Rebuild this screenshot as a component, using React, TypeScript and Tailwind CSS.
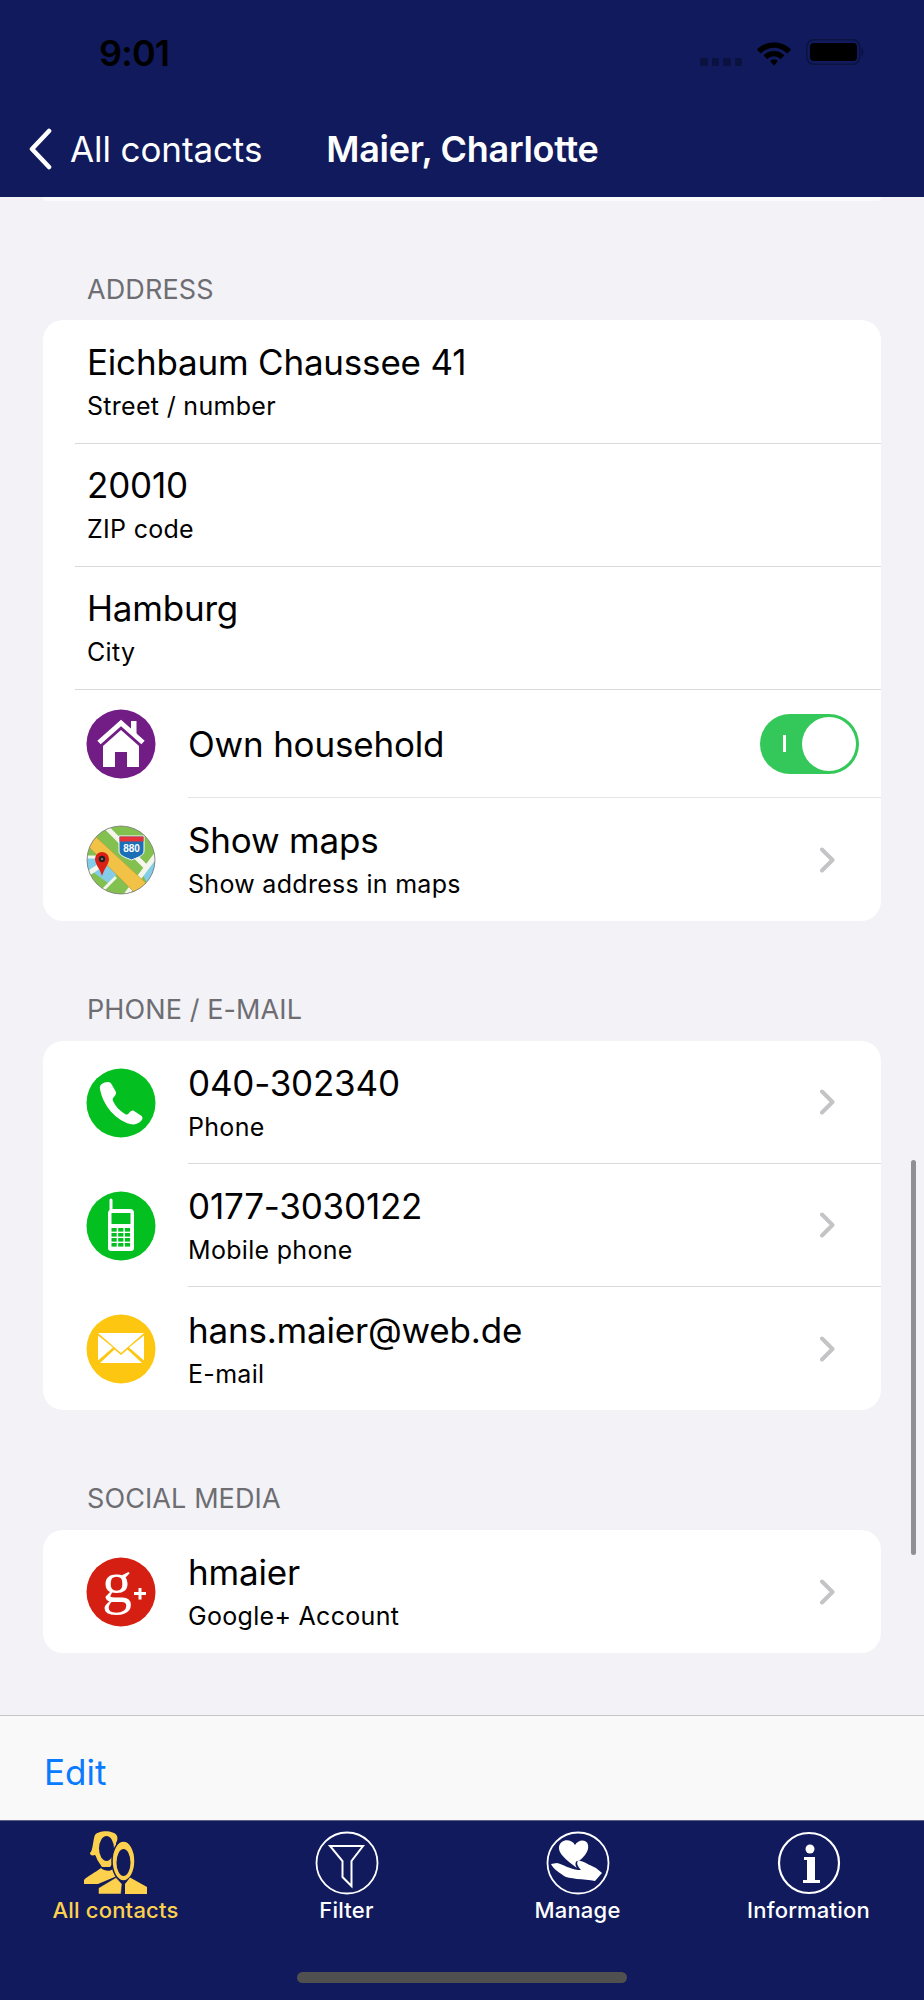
import React from "react";

const font = { fontFamily: "Inter, 'Liberation Sans', sans-serif" };

const Chevron = () => (
  <svg width="15" height="26" viewBox="0 0 15 26" className="shrink-0" fill="none">
    <path d="M2 2.5 L12.5 13 L2 23.5" stroke="#c4c4c7" strokeWidth="4" strokeLinecap="round" strokeLinejoin="round" />
  </svg>
);

const Circle = ({ color, children }: { color: string; children?: React.ReactNode }) => (
  <svg width="70" height="70" viewBox="0 0 70 70" className="shrink-0 overflow-visible">
    <circle cx="35" cy="35" r="34.5" fill={color} />
    {children}
  </svg>
);

const HomeIcon = () => (
  <Circle color="#711d85">
    <path d="M13 33.5 L35 14 L57 33.5" fill="none" stroke="#fff" strokeWidth="5" />
    <rect x="45" y="12" width="5.5" height="14" fill="#fff" />
    <path d="M17 37 L35 21 L53 37 V58 H41 V43 H29 V58 H17 Z" fill="#fff" />
  </Circle>
);

const MapIcon = () => (
  <svg width="70" height="70" viewBox="0 0 70 70" className="shrink-0">
    <defs>
      <clipPath id="mapc"><circle cx="35" cy="35" r="34" /></clipPath>
    </defs>
    <g clipPath="url(#mapc)">
      <rect width="70" height="70" fill="#82c04f" />
      <path d="M0 32 H14 L34 46 L22 58 L0 42 Z" fill="#83cde9" />
      <path d="M70 30 L56 48 L62 60 H70 Z" fill="#83cde9" />
      <path d="M18 0 L60 42 M0 50 L12 42 M40 70 L70 30" stroke="#f4f6ee" strokeWidth="5" fill="none" />
      <path d="M0 32 H26 M12 70 L30 52" stroke="#f4f6ee" strokeWidth="3" fill="none" />
      <path d="M2 21 L10 12 L62 60 L52 71 Z" fill="#f2c247" stroke="#c9a23f" strokeWidth="0.8" />
    </g>
    <circle cx="35" cy="35" r="34" fill="none" stroke="#777" strokeWidth="0.8" />
    <path d="M33 11 H58 V26 C58 31 50 33 45.5 35 C41 33 33 31 33 26 Z" fill="#1c6fb6" stroke="#fff" strokeWidth="1" />
    <rect x="33.5" y="11.5" width="24" height="5" fill="#e5323a" />
    <text x="45.5" y="27" fontSize="10" fontWeight="700" fill="#fff" textAnchor="middle" style={{ fontFamily: "Liberation Sans, sans-serif" }}>880</text>
    <path d="M9 34 A7 7 0 0 1 23 34 C23 39 18 44 16 51 C14 44 9 39 9 34 Z" fill="#d91f16" />
    <circle cx="16" cy="34" r="3.2" fill="#222" />
    <circle cx="16" cy="34" r="1.1" fill="#888" />
  </svg>
);

const PhoneIcon = () => (
  <Circle color="#04bf20">
    <path d="M14 21 C13 17 17 14 22 14 C24 14 25 15 26 17 L30 24 C30.5 26 29 28 27 30 C26.5 31 26.5 32 27 33 C30 39 34 43 39 46 C40.5 47 42 46.5 43 45 C44.5 43 46.5 42 48 43 L55 47.5 C57 49 57 51 55 53 C52 56 48 57 44 56 C30 52 17 38 14 21 Z" fill="#fff" />
  </Circle>
);

const MobileIcon = () => (
  <Circle color="#04bf20">
    <path d="M23.5 9 A1.5 1.5 0 0 1 26.5 9 V18 H44 A4 4 0 0 1 48 22 V57 A3 3 0 0 1 45 60 H25 A3 3 0 0 1 22 57 V22 A4 4 0 0 1 23.5 19 Z" fill="#fff" />
    <rect x="25.5" y="22" width="19" height="11" fill="#04bf20" />
    {[0, 1, 2, 3].map((r) =>
      [0, 1, 2].map((c) => (
        <rect key={`${r}${c}`} x={25.5 + c * 6.7} y={37 + r * 5} width="5.2" height="3.6" fill="#04bf20" />
      ))
    )}
  </Circle>
);

const MailIcon = () => (
  <Circle color="#fdc711">
    <path d="M12 19 H58 L35 39 Z" fill="#fff" />
    <path d="M12 21.5 V46.5 L27 33.5 Z" fill="#fff" />
    <path d="M58 21.5 V46.5 L43 33.5 Z" fill="#fff" />
    <path d="M14 49 L28.5 35.5 L35 41 L41.5 35.5 L56 49 Z" fill="#fff" />
  </Circle>
);

const GoogleIcon = () => (
  <Circle color="#d41f12">
    <text x="31" y="45" fontSize="60" fill="#fff" textAnchor="middle" style={{ fontFamily: "'Liberation Serif', serif" }}>g</text>
    <path d="M52.5 31 H55.5 V35 H60 V38 H55.5 V42.5 H52.5 V38 H48 V35 H52.5 Z" fill="#fff" />
  </Circle>
);

const Title = ({ children }: { children: React.ReactNode }) => (
  <div className="text-[35px] leading-[42px] tracking-[-0.2px] text-black">{children}</div>
);

const Row = ({
  title,
  sub,
  icon,
  chevron,
  border = true,
  h = "h-[123px]",
  textPad = "",
}: {
  title: string;
  sub: string;
  icon?: React.ReactNode;
  chevron?: boolean;
  border?: boolean;
  h?: string;
  textPad?: string;
}) => (
  <div className={`flex items-center ${icon ? "pl-[43px]" : "pl-[32px]"} ${h}`}>
    {icon && <div className="mr-[32px] flex shrink-0 items-center">{icon}</div>}
    <div className={`flex h-full min-w-0 flex-1 items-center pr-[46px] ${icon ? "" : "pl-[12px]"} ${border ? "border-b border-[#d9d9db]" : ""}`}>
      <div className={`flex flex-1 flex-col ${textPad}`}>
        <Title>{title}</Title>
        <div className="mt-[8px] text-[25px] leading-[30px] tracking-[0.3px] text-black">{sub}</div>
      </div>
      {chevron && <Chevron />}
    </div>
  </div>
);

const Section = ({ label, gap = "mt-[15px]", children }: { label: string; gap?: string; children: React.ReactNode }) => (
  <div>
    <div className="pl-[87px] text-[27px] leading-[32px] tracking-[0.1px] text-[#6d6d72]">{label}</div>
    <div className={`mx-[43px] overflow-hidden rounded-[20px] bg-white ${gap}`}>{children}</div>
  </div>
);

const TabItem = ({ label, color, children }: { label: string; color: string; children: React.ReactNode }) => (
  <div className="flex flex-1 flex-col items-center">
    <div className="flex h-[65px] items-center justify-center">{children}</div>
    <div className={`mt-[2px] text-[22px] font-medium leading-[26px] tracking-[0.2px] ${color}`}>{label}</div>
  </div>
);

export default function App() {
  return (
    <div className="relative flex h-[2000px] w-[924px] flex-col overflow-hidden bg-[#f2f2f7]" style={font}>
      {/* Header */}
      <div className="h-[197px] shrink-0 bg-[#101a5c]">
        <div className="flex h-[128px] items-start justify-between pl-[99px] pr-[60px] pt-[31px]">
          <div className="text-[36px] font-semibold leading-[44px] tracking-[-0.8px] text-black">9:01</div>
          <div className="mt-[8px] flex items-start">
            <div className="mt-[19px] mr-[14px] flex gap-[4px]">
              {[0, 1, 2, 3].map((i) => (
                <div key={i} className="h-[8px] w-[7.5px] rounded-[1px] bg-[#0b1240]" />
              ))}
            </div>
            <svg width="36" height="27" viewBox="0 0 38 28" className="mr-[14px]">
              <path d="M1 11 C10 1 28 1 37 11 L33 15 C25 7 13 7 5 15 Z" fill="#000" />
              <path d="M8 17 C14 11 24 11 30 17 L26 21 C22 17 16 17 12 21 Z" fill="#000" />
              <path d="M15 23 C17 21 21 21 23 23 L19 28 Z" fill="#000" />
            </svg>
            <svg width="58" height="26" viewBox="0 0 58 26">
              <rect x="0.75" y="0.75" width="53" height="24.5" rx="7" fill="none" stroke="#0b1240" strokeWidth="1.5" />
              <rect x="4" y="4" width="47" height="18" rx="4" fill="#000" />
              <path d="M55.5 9 C58 10 58 16 55.5 17 Z" fill="#0b1240" />
            </svg>
          </div>
        </div>
        <div className="flex items-center pl-[27px]">
          <svg width="26" height="42" viewBox="0 0 26 42" fill="none">
            <path d="M22 3 L5 21 L22 39" stroke="#fff" strokeWidth="4.6" strokeLinecap="round" strokeLinejoin="round" />
          </svg>
          <div className="ml-[17px] text-[35px] leading-[42px] tracking-[-0.1px] text-white">All contacts</div>
          <div className="ml-[64px] text-[36px] font-semibold leading-[42px] tracking-[-0.3px] text-white">Maier, Charlotte</div>
        </div>
      </div>

      {/* Content */}
      <div className="flex-1">
        <div className="mx-[43px] h-[4px] rounded-b-[18px] bg-[#fbfbfd]" />
        <div className="pt-[73px]">
          <Section label="ADDRESS" gap="mt-[14px]">
            <Row title="Eichbaum Chaussee 41" sub="Street / number" h="h-[124px]" textPad="pb-[2px]" />
            <Row title="20010" sub="ZIP code" textPad="pb-[2px]" />
            <Row title="Hamburg" sub="City" textPad="pb-[2px]" />
            <div className="flex h-[108px] items-center pl-[43px]">
              <div className="mr-[32px] flex shrink-0"><HomeIcon /></div>
              <div className="flex h-full flex-1 items-center justify-between border-b border-[#e4e4e6] pr-[22px]">
                <Title>Own household</Title>
                <div className="flex h-[60px] w-[99px] items-center justify-end rounded-full bg-[#34c85a] pr-[3px]">
                  <div className="mr-auto ml-[23px] h-[17px] w-[2.5px] bg-white" />
                  <div className="h-[54px] w-[54px] rounded-full bg-white" />
                </div>
              </div>
            </div>
            <Row title="Show maps" sub="Show address in maps" icon={<MapIcon />} chevron border={false} textPad="pb-[2px]" />
          </Section>

          <div className="mt-[73px]">
            <Section label="PHONE / E-MAIL">
              <Row title="040-302340" sub="Phone" icon={<PhoneIcon />} chevron />
              <Row title="0177-3030122" sub="Mobile phone" icon={<MobileIcon />} chevron />
              <Row title="hans.maier@web.de" sub="E-mail" icon={<MailIcon />} chevron border={false} />
            </Section>
          </div>

          <div className="mt-[73px]">
            <Section label="SOCIAL MEDIA">
              <Row title="hmaier" sub="Google+ Account" icon={<GoogleIcon />} chevron border={false} textPad="pb-[2px]" />
            </Section>
          </div>
        </div>
      </div>

      {/* Toolbar */}
      <div className="flex h-[105px] shrink-0 items-center border-t border-[#c6c6c9] bg-[#f9f9f9] pl-[44px] pt-[8px]">
        <span className="text-[35px] leading-[40px] text-[#0a7aff]">Edit</span>
      </div>

      {/* Tab bar */}
      <div className="relative h-[180px] shrink-0 border-t border-[#5b5f86] bg-[#101a5c] pt-[9px]">
        <div className="flex">
          <TabItem label="All contacts" color="text-[#fdd14d]">
            <svg width="64" height="64" viewBox="0 0 64 64">
              <path d="M11 4 C15 -1 30 -1 33 5 C34 8 33 10 32 12 L32 28 L26 36 H18 L14 30 C12 26 12 25 11 24 C8 25 6 24 6 22 C9 20 9 8 11 4 Z" fill="#fdd14d" />
              <ellipse cx="22.5" cy="17.5" rx="7.5" ry="12.5" fill="#101a5c" />
              <path d="M0 53 V49 C2 46 12 41 17 37 C20 40 26 41 29 38 L33 45 L14 53 Z" fill="#fdd14d" />
              <ellipse cx="39.5" cy="30" rx="11.5" ry="20" fill="#fdd14d" stroke="#101a5c" strokeWidth="1.5" />
              <ellipse cx="39.5" cy="31.5" rx="7" ry="13.5" fill="#101a5c" />
              <path d="M14.5 63 V57 L32 46.5 L38 53 L37 63 Z" fill="#fdd14d" stroke="#101a5c" strokeWidth="0.5" />
              <path d="M41 63 V53 L46 46.5 L63 56 V63 Z" fill="#fdd14d" />
            </svg>
          </TabItem>
          <TabItem label="Filter" color="text-white">
            <svg width="64" height="64" viewBox="0 0 64 64" fill="none">
              <circle cx="32" cy="32" r="30.5" stroke="#fff" strokeWidth="1.8" />
              <path d="M15 15 H48 L36.5 30 V55 L27.5 46 V30 Z" stroke="#fff" strokeWidth="2" strokeLinejoin="miter" />
            </svg>
          </TabItem>
          <TabItem label="Manage" color="text-white">
            <svg width="64" height="64" viewBox="0 0 64 64" fill="none">
              <circle cx="32" cy="32" r="30.5" stroke="#fff" strokeWidth="1.8" />
              <path d="M31 37 C20 29 12 22 13 16 C14 8 25 7 29 14 C33 7 44 8 42 18 C41 22 38 26 33 30 C30 29 28 33 31 37 Z" fill="#fff" />
              <path d="M5 33 L11 32 C18 34 24 38 32 39 L35 39 C32 36 30 32 32 30 C36 29 42 34 50 37 L56 42 L49 50 C38 48 22 48 18 45 C14 42 7 38 5 33 Z" fill="#fff" />
            </svg>
          </TabItem>
          <TabItem label="Information" color="text-white">
            <svg width="64" height="64" viewBox="0 0 64 64" fill="none">
              <circle cx="32" cy="32" r="30" stroke="#fff" strokeWidth="2.2" />
              <circle cx="33" cy="18" r="4.5" fill="#fff" />
              <path d="M27 26 H38 V49 H43 V52 H26 V49 H30 V29 H27 Z" fill="#fff" />
            </svg>
          </TabItem>
        </div>
        <div className="absolute bottom-[17px] left-[297px] h-[11px] w-[330px] rounded-full bg-[#505050]" />
      </div>

      {/* Scroll indicator */}
      <div className="absolute left-[911px] top-[1160px] h-[395px] w-[5px] rounded-full bg-[#8f8f94]" />
    </div>
  );
}
